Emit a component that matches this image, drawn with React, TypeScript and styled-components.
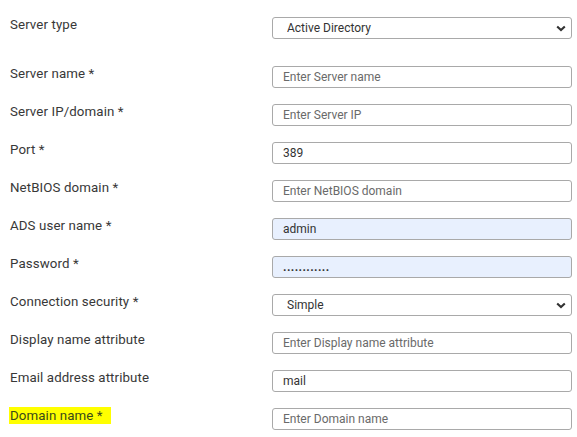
import React from "react";
import styled, { createGlobalStyle } from "styled-components";

const GlobalStyle = createGlobalStyle`
  html, body {
    margin: 0;
    padding: 0;
    background: #ffffff;
  }
  body {
    font-family: Roboto, "Liberation Sans", Arial, sans-serif;
  }
`;

const chevron = `url("data:image/svg+xml,%3Csvg xmlns='http://www.w3.org/2000/svg' width='10' height='7' viewBox='0 0 10 7'%3E%3Cpath d='M1.2 1.4 L5 5 L8.8 1.4' fill='none' stroke='%23333333' stroke-width='2.1'/%3E%3C/svg%3E")`;

type FieldRow = {
  label: string;
  kind: "select" | "text" | "password";
  value?: string;
  placeholder?: string;
  options?: string[];
  autofill?: boolean;
  highlight?: boolean;
};

const rows: FieldRow[] = [
  { label: "Server type", kind: "select", value: "Active Directory", options: ["Active Directory", "LDAP", "RADIUS", "TACACS+", "eDirectory"] },
  { label: "Server name *", kind: "text", placeholder: "Enter Server name" },
  { label: "Server IP/domain *", kind: "text", placeholder: "Enter Server IP" },
  { label: "Port *", kind: "text", value: "389" },
  { label: "NetBIOS domain *", kind: "text", placeholder: "Enter NetBIOS domain" },
  { label: "ADS user name *", kind: "text", value: "admin", autofill: true },
  { label: "Password *", kind: "password", value: "............", autofill: true },
  { label: "Connection security *", kind: "select", value: "Simple", options: ["Simple", "SSL/TLS", "STARTTLS"] },
  { label: "Display name attribute", kind: "text", placeholder: "Enter Display name attribute" },
  { label: "Email address attribute", kind: "text", value: "mail" },
  { label: "Domain name *", kind: "text", placeholder: "Enter Domain name", highlight: true },
];

export default function App() {
  return (
    <>
      <GlobalStyle />
      <Form>
        {rows.map((row, i) => (
          <Row key={row.label} first={i === 0}>
            <LabelCell>
              <Label highlight={row.highlight}>{row.label}</Label>
            </LabelCell>
            {row.kind === "select" ? (
              <Select defaultValue={row.value}>
                {row.options?.map((o) => (
                  <option key={o} value={o}>
                    {o}
                  </option>
                ))}
              </Select>
            ) : (
              <Input
                type="text"
                defaultValue={row.value}
                placeholder={row.placeholder}
                autofill={row.autofill}
                secret={row.kind === "password"}
                readOnly={row.kind === "password"}
              />
            )}
          </Row>
        ))}
      </Form>
    </>
  );
}

const Form = styled.div`
  display: flex;
  flex-direction: column;
  gap: 16px;
  padding: 17px 0 0 10px;
  width: 562px;
`;

const Row = styled.div<{ first?: boolean }>`
  display: flex;
  align-items: flex-start;
  margin-bottom: ${(p) => (p.first ? "11px" : "0")};
`;

const LabelCell = styled.div`
  width: 262px;
  flex-shrink: 0;
  margin-top: -3px;
`;

const Label = styled.span<{ highlight?: boolean }>`
  display: inline-block;
  font-size: 13.3px;
  line-height: 16px;
  letter-spacing: 0.1px;
  padding: ${(p) => (p.highlight ? "1px 8px 0 0" : "0")};
  margin-left: ${(p) => (p.highlight ? "-1px" : "0")};
  padding-left: ${(p) => (p.highlight ? "1px" : "0")};
  background: ${(p) => (p.highlight ? "#ffff00" : "transparent")};
  color: ${(p) => (p.highlight ? "#3a4a1a" : "#383838")};
`;

const fieldBase = `
  box-sizing: border-box;
  width: 300px;
  height: 22px;
  border: 1px solid #a9a9a9;
  border-radius: 3px;
  font-family: Roboto, "Liberation Sans", Arial, sans-serif;
  font-size: 12px;
  color: #333333;
  outline: none;
  margin: 0;
`;

const Select = styled.select`
  ${fieldBase}
  appearance: none;
  -webkit-appearance: none;
  padding: 0 24px 0 14px;
  background: #ffffff ${chevron} no-repeat right 5px center;
`;

const Input = styled.input<{ autofill?: boolean; secret?: boolean }>`
  ${fieldBase}
  padding: 0 10px;
  background: ${(p) => (p.autofill ? "#e8f0fe" : "#ffffff")};
  letter-spacing: ${(p) => (p.secret ? "0.4px" : "normal")};
  font-weight: ${(p) => (p.secret ? "700" : "400")};

  &::placeholder {
    color: #6a6a6a;
  }
`;
